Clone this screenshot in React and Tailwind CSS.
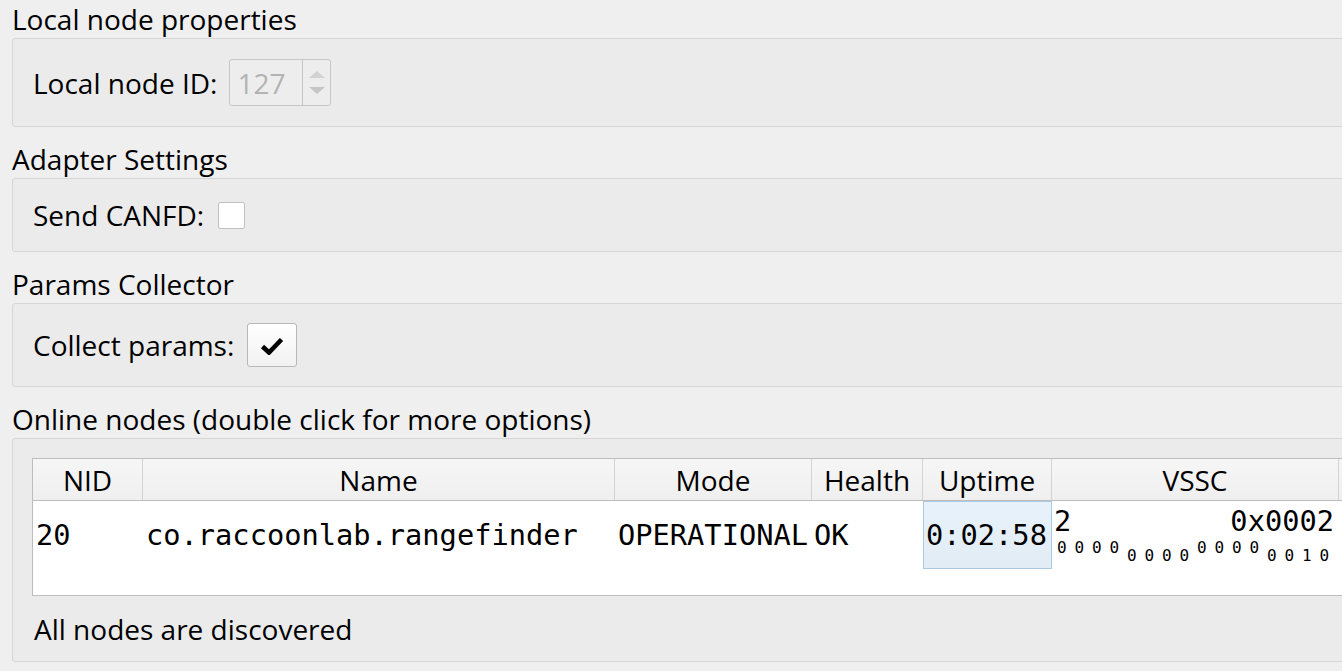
const COLUMNS = [
  { id: "nid", label: "NID", width: "w-[110px]" },
  { id: "name", label: "Name", width: "w-[472px]" },
  { id: "mode", label: "Mode", width: "w-[197px]" },
  { id: "health", label: "Health", width: "w-[111px]" },
  { id: "uptime", label: "Uptime", width: "w-[129px]" },
  { id: "vssc", label: "VSSC", width: "w-[287px]" },
  { id: "more", label: "", width: "w-[200px]" }
];

const BITS = [
  { value: "0000", place: "self-start" },
  { value: "0000", place: "self-end" },
  { value: "0000", place: "self-start" },
  { value: "0010", place: "self-end" }
];

function GroupTitle({ children, first }) {
  return (
    <div className={`flex h-[38px] items-center ${first ? "" : "mt-[13px]"}`}>
      <span className="leading-none">{children}</span>
    </div>
  );
}

function GroupBox({ height, children, className = "" }) {
  return (
    <div
      className={`rounded-[3px] border border-[#d6d6d6] bg-[#ebebeb] pl-5 ${height} ${className}`}
    >
      {children}
    </div>
  );
}

function SpinBox() {
  return (
    <div className="flex h-[47px] w-[102px] rounded-[3px] border border-[#c6c6c6] bg-[#ededed]">
      <div className="flex flex-1 items-center pl-[7px] text-[#b3b3b3]">127</div>
      <div className="flex w-[28px] flex-col items-center justify-center gap-[9px] border-l border-[#c6c6c6]">
        <div className="h-0 w-0 border-x-[8px] border-b-[7px] border-x-transparent border-b-[#d2d2d2]" />
        <div className="h-0 w-0 border-x-[8px] border-t-[7px] border-x-transparent border-t-[#c6c6c6]" />
      </div>
    </div>
  );
}

export default function App() {
  const mono = "font-['DejaVu_Sans_Mono',monospace] text-[28.7px] leading-none";

  return (
    <div className="h-[671px] w-full overflow-hidden bg-[#efefef] font-['Open_Sans',sans-serif] text-[28px] text-black">
      <div className="w-[1420px] pl-3">
        <GroupTitle first>Local node properties</GroupTitle>
        <GroupBox height="h-[89px]" className="flex items-center gap-[12px]">
          <span className="leading-none">Local node ID:</span>
          <SpinBox />
        </GroupBox>

        <GroupTitle>Adapter Settings</GroupTitle>
        <GroupBox height="h-[74px]" className="flex items-center gap-[14px]">
          <span className="leading-none">Send CANFD:</span>
          <div className="h-[27px] w-[27px] rounded-[2px] border border-[#c0c0c0] bg-white" />
        </GroupBox>

        <GroupTitle>Params Collector</GroupTitle>
        <GroupBox height="h-[84px]" className="flex items-center gap-[13px]">
          <span className="leading-none">Collect params:</span>
          <div className="flex h-[44px] w-[50px] items-center justify-center rounded-[3px] border border-[#b8b8b8] bg-gradient-to-b from-white to-[#f1f1f1]">
            <svg width="24" height="18" viewBox="0 0 24 18" className="mt-[2px]">
              <path d="M2.5 9.5 L9 15.5 L21.5 2.5" fill="none" stroke="black" strokeWidth="4.6" strokeLinejoin="miter" />
            </svg>
          </div>
        </GroupBox>

        <GroupTitle>Online nodes (double click for more options)</GroupTitle>
        <GroupBox height="h-[224px]" className="flex flex-col pt-[19px]">
          <div className="-ml-px h-[138px] border border-[#bdbdbd] bg-white">
            <div className="flex h-[42px] border-b border-[#bdbdbd] bg-gradient-to-b from-[#f6f6f6] to-[#efefef]">
              {COLUMNS.map((col) => (
                <div
                  key={col.id}
                  className={`flex shrink-0 items-center justify-center border-r border-[#d3d3d3] ${col.width}`}
                >
                  <span className="leading-none">{col.label}</span>
                </div>
              ))}
            </div>
            <div className={`flex h-[68px] ${mono}`}>
              <div className="flex w-[110px] shrink-0 items-center pl-[3px]">20</div>
              <div className="flex w-[472px] shrink-0 items-center pl-[3px]">co.raccoonlab.rangefinder</div>
              <div className="flex w-[197px] shrink-0 items-center pl-[3px]">OPERATIONAL</div>
              <div className="flex w-[111px] shrink-0 items-center pl-[2px]">OK</div>
              <div className="flex w-[129px] shrink-0 items-center border border-[#adc8e1] bg-gradient-to-b from-[#e8f2fb] to-[#e2ecf5] pl-[2px]">
                0:02:58
              </div>
              <div className="flex w-[287px] shrink-0 flex-col pl-[2px] pr-[5px] pt-[6px]">
                <div className="flex justify-between">
                  <span>2</span>
                  <span>0x0002</span>
                </div>
                <div className="mt-[4px] flex h-[24px] pl-[3px]">
                  {BITS.map((bits, i) => (
                    <span
                      key={i}
                      className={`w-[70px] font-['DejaVu_Sans_Mono',monospace] text-[16px] leading-none tracking-[7.9px] ${bits.place}`}
                    >
                      {bits.value}
                    </span>
                  ))}
                </div>
              </div>
            </div>
          </div>
          <div className="flex flex-1 items-center pl-px">
            <span className="leading-none">All nodes are discovered</span>
          </div>
        </GroupBox>
      </div>
    </div>
  );
}
